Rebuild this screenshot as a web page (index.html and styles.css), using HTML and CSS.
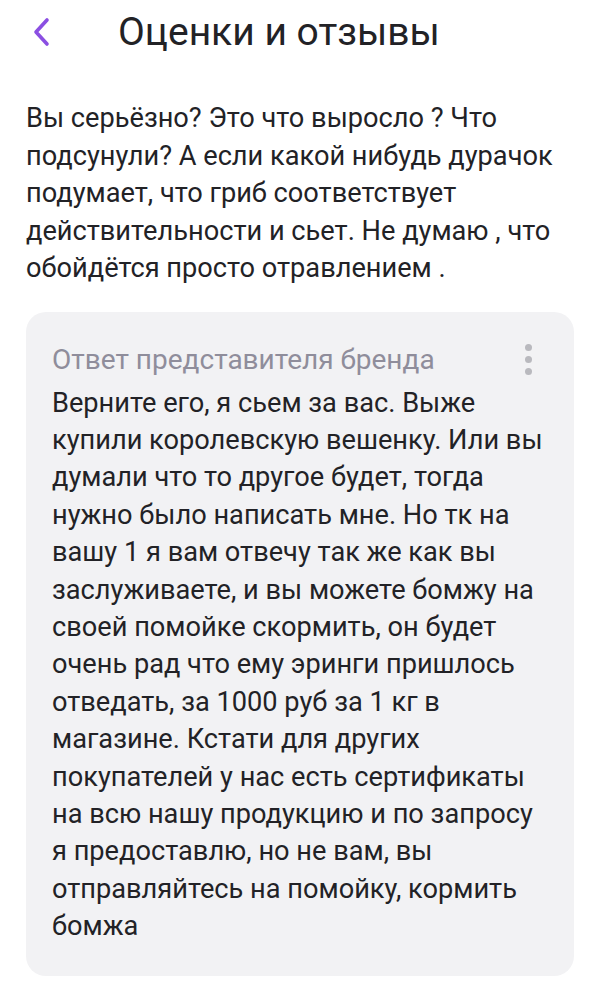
FILE: index.html
```html
<!DOCTYPE html>
<html lang="ru">
<head>
    <meta charset="UTF-8">
    <meta name="viewport" content="width=device-width, initial-scale=1.0">
    <title>Оценки и отзывы</title>
    <link rel="stylesheet" href="styles.css">
</head>
<body>
    <header class="topbar">
        <button class="back" aria-label="Назад">
            <svg width="20" height="32" viewBox="0 0 20 32">
                <path d="M15 4 L4 16 L15 28" fill="none" stroke="#8b4fe2" stroke-width="3.6" stroke-linecap="round" stroke-linejoin="round"/>
            </svg>
        </button>
        <h1>Оценки и отзывы</h1>
    </header>

    <p class="review">Вы серьёзно? Это что выросло ? Что подсунули? А если какой нибудь дурачок подумает, что гриб соответствует действительности и сьет. Не думаю , что обойдётся просто отравлением .</p>

    <div class="answer">
        <div class="answer-head">
            <span class="answer-title">Ответ представителя бренда</span>
            <span class="more"><i></i><i></i><i></i></span>
        </div>
        <p class="answer-text">Верните его, я сьем за вас. Выже купили королевскую вешенку. Или вы думали что то другое будет, тогда нужно было написать мне. Но тк на вашу 1 я вам отвечу так же как вы заслуживаете, и вы можете бомжу на своей помойке скормить, он будет очень рад что ему эринги пришлось отведать, за 1000 руб за 1 кг в магазине. Кстати для других покупателей у нас есть сертификаты на всю нашу продукцию и по запросу я предоставлю, но не вам, вы отправляйтесь на помойку, кормить бомжа</p>
    </div>
</body>
</html>
```

FILE: styles.css
```css
body {
    font-family: Roboto, "Noto Sans", sans-serif;
    color: #222226;
    background: #fff;
    margin: 0;
    padding: 0 26px;
}
.topbar {
    display: flex;
    align-items: center;
    height: 64px;
}
.back {
    background: none;
    border: none;
    padding: 0;
    margin-left: 6px;
    width: 20px;
    height: 32px;
    cursor: pointer;
}
.topbar h1 {
    margin: 0 0 0 66px;
    font-size: 39px;
    font-weight: 400;
}
.review {
    margin: 36px 0 0;
    font-size: 27.2px;
    line-height: 37.5px;
}
.answer {
    margin-top: 24px;
    background: #f2f2f4;
    border-radius: 20px;
    padding: 31px 20px 30px 26px;
}
.answer-head {
    display: flex;
    justify-content: space-between;
    align-items: center;
}
.answer-title {
    color: #8f8d9b;
    font-size: 28px;
}
.more {
    display: flex;
    flex-direction: column;
    gap: 5px;
    margin-right: 22px;
}
.more i {
    width: 7px;
    height: 7px;
    border-radius: 50%;
    background: #b9b9be;
}
.answer-text {
    margin: 9px 0 0;
    font-size: 27.2px;
    line-height: 37.4px;
}
```
